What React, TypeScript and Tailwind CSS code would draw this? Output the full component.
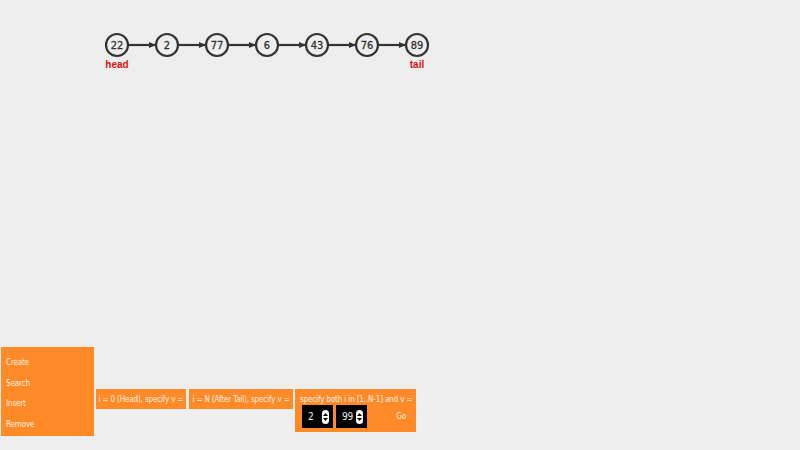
import React from "react";

const NODES = [22, 2, 77, 6, 43, 76, 89];
const SANS = '"Liberation Sans", Arial, sans-serif';
const COND = '"DejaVu Sans Condensed", "DejaVu Sans", sans-serif';

function Spinner() {
  return (
    <div className="flex h-[14px] w-[7px] flex-col items-center justify-center gap-[2px] rounded-[4px] bg-white">
      <svg width="5" height="3" viewBox="0 0 5 3">
        <path d="M0 3 L2.5 0 L5 3 Z" fill="#000" />
      </svg>
      <svg width="5" height="3" viewBox="0 0 5 3">
        <path d="M0 0 L2.5 3 L5 0 Z" fill="#000" />
      </svg>
    </div>
  );
}

function NumBox({ value }: { value: string }) {
  return (
    <div className="flex h-[23px] w-[31px] items-center justify-between bg-black pl-[6px] pr-[4px] text-[10px] text-[#eee]">
      <span>{value}</span>
      <Spinner />
    </div>
  );
}

export default function App() {
  return (
    <div className="flex h-[450px] w-[800px] flex-col bg-[#eeeeee]" style={{ fontFamily: SANS }}>
      <svg width="800" height="80" viewBox="0 0 800 80" className="block">
        <defs>
          <marker id="arr" markerWidth="8" markerHeight="8" refX="7" refY="4" orient="auto" markerUnits="userSpaceOnUse">
            <path d="M0 1 L7 4 L0 7 Z" fill="#333" />
          </marker>
        </defs>
        {NODES.slice(0, -1).map((_, i) => {
          const x = 117 + i * 50;
          return (
            <line key={i} x1={x + 11} y1={45} x2={x + 39} y2={45} stroke="#333" strokeWidth="2.2" markerEnd="url(#arr)" />
          );
        })}
        {NODES.map((n, i) => {
          const x = 117 + i * 50;
          return (
            <g key={i}>
              <circle cx={x} cy={45} r={11} fill="#eeeeee" stroke="#333" strokeWidth="2.2" />
              <text x={x} y={49} textAnchor="middle" fontSize="11" fill="#333" stroke="#333" strokeWidth="0.3" style={{ fontFamily: COND }}>
                {n}
              </text>
            </g>
          );
        })}
        <text x={117} y={68} textAnchor="middle" fontSize="10" fontWeight="700" fill="#e01010">
          head
        </text>
        <text x={417} y={68} textAnchor="middle" fontSize="10" fontWeight="700" fill="#e01010">
          tail
        </text>
      </svg>

      <div className="mt-auto mb-[14px] ml-[1px] flex items-start whitespace-nowrap text-[8px] tracking-[-0.15px] text-[#fdf1e6]" style={{ fontFamily: COND }}>
        <div className="flex h-[89px] w-[93px] flex-col bg-[#ff8a27] pl-[5px] pt-[6px] leading-[20.7px]">
          <div>Create</div>
          <div>Search</div>
          <div>Insert</div>
          <div>Remove</div>
        </div>
        <div className="ml-[2px] mt-[42px] flex h-[20px] w-[90px] items-center justify-center bg-[#ff8a27] pt-[2px]">
          i = 0 (Head), specify v =
        </div>
        <div className="ml-[3px] mt-[42px] flex h-[20px] w-[104px] items-center justify-center bg-[#ff8a27] pt-[2px]">
          i = N (After Tail), specify v =
        </div>
        <div className="ml-[2px] mt-[42px] flex h-[43px] w-[121px] flex-col bg-[#ff8a27] pl-[5px] pr-[4px] pt-[6px]">
          <div className="text-center leading-[10px]">specify both i in [1..N-1] and v =</div>
          <div className="flex items-center pl-[2px]">
            <NumBox value="2" />
            <div className="ml-[3px]">
              <NumBox value="99" />
            </div>
            <div className="ml-auto mr-[6px]">Go</div>
          </div>
        </div>
      </div>
    </div>
  );
}
